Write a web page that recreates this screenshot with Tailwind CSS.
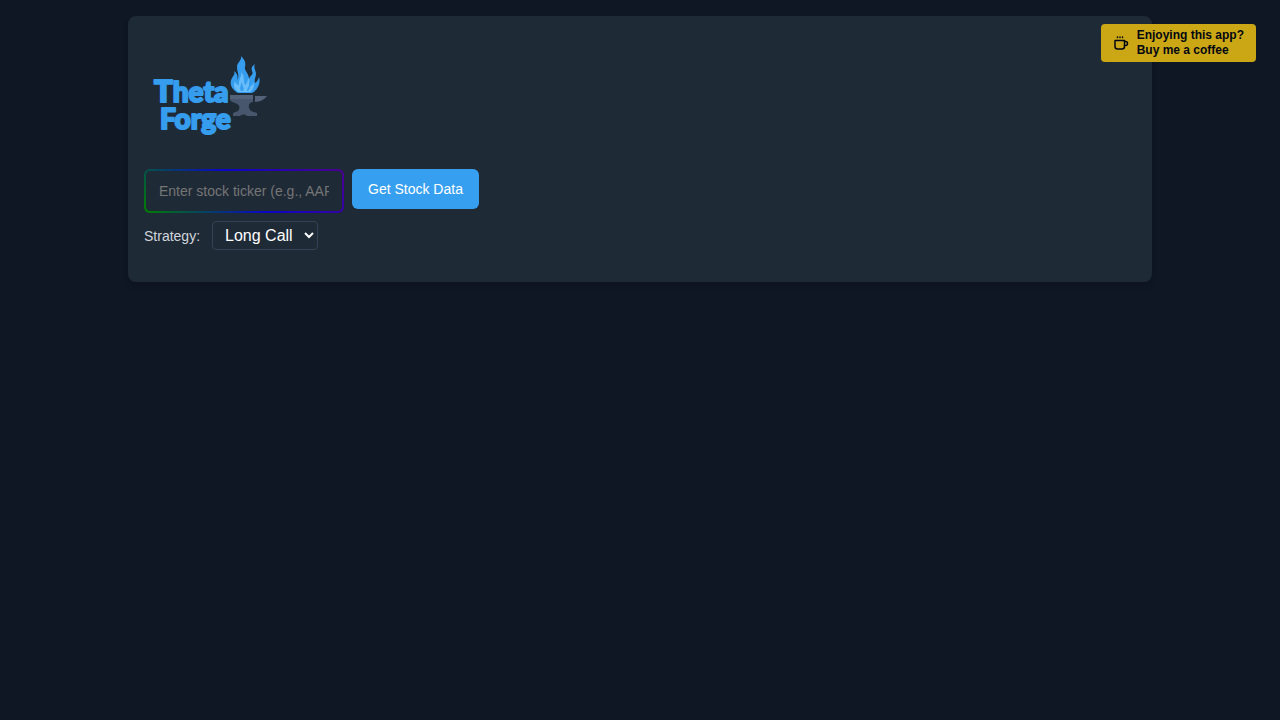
<!DOCTYPE html>
<html lang="en">
<head>
  <meta charset="UTF-8" />
  <meta name="viewport" content="width=device-width, initial-scale=1" />
  <title>Theta Forge</title>
  <script src="https://cdn.jsdelivr.net/npm/@tailwindcss/browser@4"></script>
</head>
<body class="min-h-screen bg-[#101724] px-4 py-4 font-['Liberation_Sans',Arial,sans-serif] text-sm text-gray-300">
  <!-- Donate link -->
  <a href="#coffee" class="fixed top-6 right-6 flex items-center gap-2 rounded-sm bg-[#cba716] px-3 py-1 text-xs leading-[15px] font-bold text-gray-950">
    <svg class="h-4 w-4" viewBox="0 0 16 16" fill="none" stroke="currentColor" stroke-width="1.5" stroke-linecap="round" stroke-linejoin="round" aria-hidden="true">
      <path d="M2 5.5h9.5v6a2.5 2.5 0 0 1-2.5 2.5H4.5A2.5 2.5 0 0 1 2 11.500z" />
      <path d="M11.5 6.5h1a2 2 0 0 1 2 2a2 2 0 0 1-2 2h-1" />
      <path d="M4.5 2v.5M7 2v.5M9.5 2v.5" />
    </svg>
    <span>Enjoying this app?<br />Buy me a coffee</span>
  </a>

  <main class="mx-auto max-w-5xl rounded-lg bg-[#1f2a37] px-4 pt-4 pb-8 shadow-md">
    <!-- Logo -->
    <h1 class="mb-2">
      <svg class="h-[129px] w-[129px]" viewBox="0 0 129 129" role="img" aria-label="Theta Forge">
        <g fill="#369ced" stroke="#369ced" stroke-width="2" stroke-linejoin="round" font-family="Lato, sans-serif" font-weight="900" font-size="28">
          <text x="10" y="70"><tspan font-size="31">T</tspan>heta</text>
          <text x="16" y="97">Forge</text>
        </g>
        <!-- Flame -->
        <path fill="#369ced" d="M94 61C87 57 85 51 88 46C90 43 91 42 90 39C94 42 94 45 93 48C96 44 93 40 93 35C93 30 98 29 97 24C101 28 102 31 101 35C100 39 105 41 105 47C106 43 110 43 108 39C107 36 108 34 111 32C109 36 112 38 112 42C112 45 110 47 111 51C113 50 114 48 115 45C117 51 114 58 108 61Z" />
        <path fill="#68bdfa" d="M94 60C90 57 89 53 91 49C92 52 93 53 95 53C94 48 98 45 97 40C101 44 99 48 101 53C104 51 103 48 105 46C106 50 104 53 106 55C108 54 109 52 109 50C111 54 109 58 106 60Z" />
        <path fill="#369ced" d="M97 59C95 56 97 53 98 50C98 54 101 56 99 59ZM103 59C103 56 105 55 105 53C107 56 105 58 104 59Z" />
        <!-- Anvil -->
        <path fill="#536278" d="M86 63H109V67H86ZM111 64H123C121 67 116 70 111 70Z" />
        <path fill="#47566c" d="M86 67H109V70C105 70 103 75 107 79L113 81V84H103C101 82 98 82 96 84H89V81L94 79C97 75 95 72 91 71C88 70 86 69 86 67Z" />
      </svg>
    </h1>

    <form>
      <!-- Ticker search -->
      <div class="mb-2 flex items-start gap-2">
        <div class="w-[200px] rounded-md bg-linear-45/srgb from-[#008000] via-[#0a05c8] to-[#4b0090] p-0.5">
          <input
            type="text"
            id="ticker"
            aria-label="Stock ticker"
            placeholder="Enter stock ticker (e.g., AAPL)"
            class="block h-10 w-full rounded-sm border border-[#1f2a37] bg-[#1f2a37] px-3 text-sm text-white placeholder:text-[#757575] focus:outline-none"
          />
        </div>
        <button type="button" class="h-10 rounded-md bg-[#379ff0] px-4 text-sm text-white hover:bg-blue-500">Get Stock Data</button>
      </div>

      <!-- Strategy -->
      <div class="flex items-center gap-3">
        <label for="strategy">Strategy:</label>
        <select id="strategy" class="h-[29px] w-[106px] rounded-sm border border-gray-700 bg-[#1f2a37] px-2 text-base leading-5 text-white">
          <option>Long Call</option>
        </select>
      </div>
    </form>
  </main>
</body>
</html>
